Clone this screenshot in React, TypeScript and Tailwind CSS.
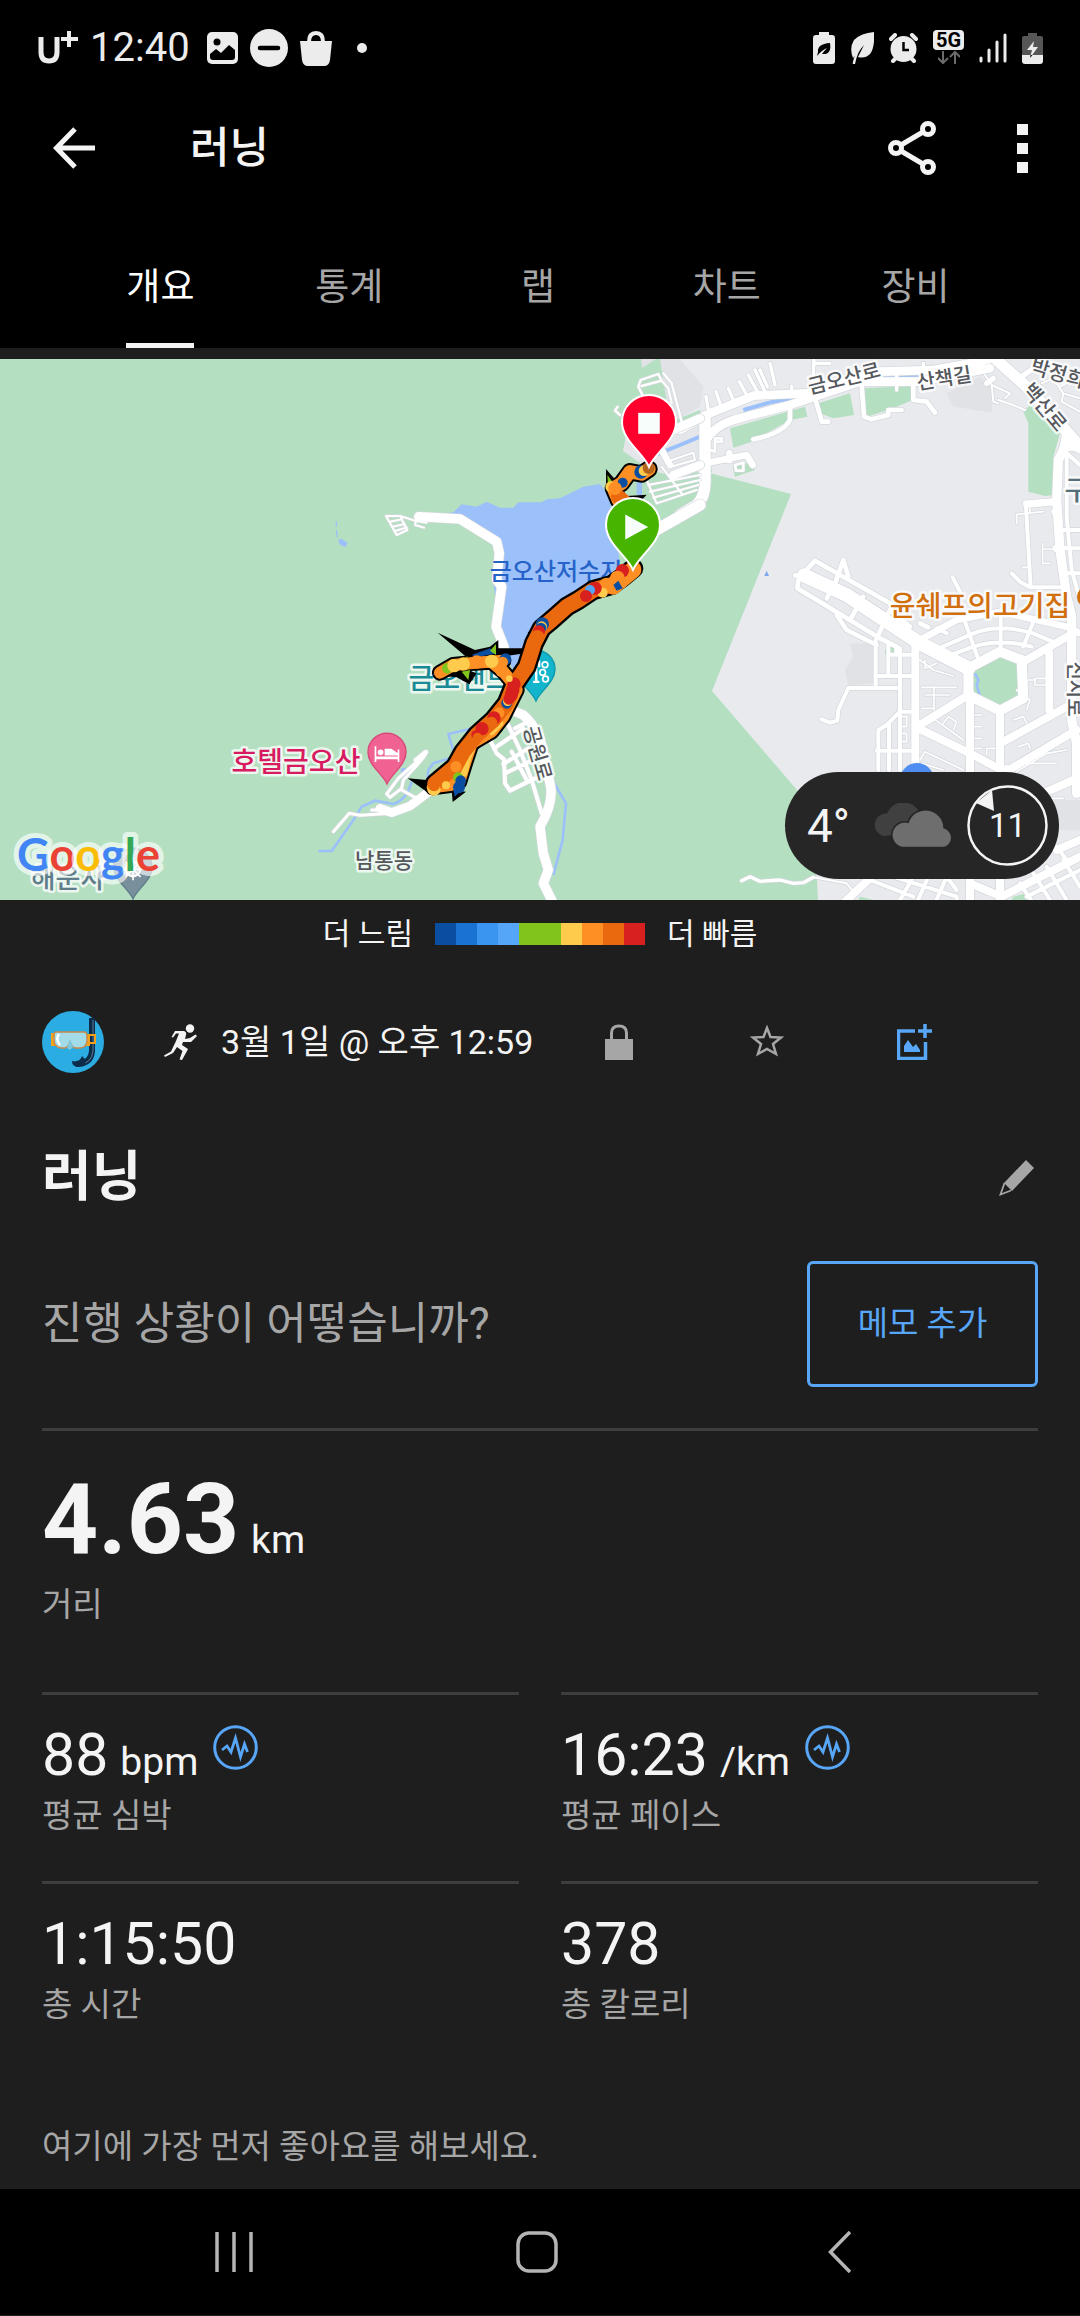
import type { ReactNode } from 'react';
import { clsx } from 'clsx';

interface Stat {
  readonly value: string;
  readonly unit?: string;
  readonly label: string;
  readonly zones?: boolean;
}

interface Road {
  readonly w: number;
  readonly d: string;
}

const TABS = ['개요', '통계', '랩', '차트', '장비'];

const STATS: Stat[] = [
  { value: '88', unit: 'bpm', label: '평균 심박', zones: true },
  { value: '16:23', unit: '/km', label: '평균 페이스', zones: true },
  { value: '1:15:50', label: '총 시간' },
  { value: '378', label: '총 칼로리' },
];

const PACE_COLORS = [
  'bg-[#0a4ea2]',
  'bg-[#1a73d2]',
  'bg-[#3a95f0]',
  'bg-[#55a5f8]',
  'bg-[#80c41c]',
  'bg-[#80c41c]',
  'bg-[#ffcb4c]',
  'bg-[#fd8f24]',
  'bg-[#ea690f]',
  'bg-[#d8201f]',
];

// Map pieces are kept in 3x tile units
const TILE_NORTH = 'translate(300 350) scale(.33333)';
const TILE_EAST = 'translate(680 350) scale(.33333)';
const TILE_SOUTH = 'translate(360 600) scale(.33333)';

const NORTH_ROADS: Road[] = [
  { w: 28, d: 'M356 500L480 507L590 575L598 610L590 690L605 710L588 830L612 890V930' },
  { w: 6, d: 'M258 498H300L322 540L290 555ZM270 515L306 508M278 530L314 522M286 543L320 532M300 498L345 512L380 518M350 500L345 525L372 533' },
  { w: 7, d: 'M1030 140L1015 110L1022 90L1075 72L1085 92L1025 108M1085 92L1105 115L1115 160M1090 70L1115 100L1145 215M960 195L945 182L953 170' },
  { w: 34, d: 'M1060 545L1200 465' },
  { w: 26, d: 'M1120 240L1200 205M1120 375L1200 345' },
  { w: 20, d: 'M1085 300L1110 345' },
  { w: 6, d: 'M1040 390L1070 460L1190 420M1045 405L1200 375M1050 425L1200 390M1060 443L1195 405M1085 350L1145 430M1115 330L1180 308L1185 330L1120 348' },
];

const EAST_ROADS: Road[] = [
  { w: 26, d: 'M0 240L90 190L220 137L380 130L600 65L760 60L900 35L960 18' },
  { w: 26, d: 'M75 275Q100 230 160 210L330 165L540 95L720 95L930 55' },
  { w: 34, d: 'M75 200V380Q78 440 50 465L0 495' },
  { w: 20, d: 'M0 375L75 340L200 315L218 345M148 310V330' },
  { w: 8, d: 'M165 345L190 338V362H168ZM92 300L105 305V265H125V275H108' },
  { w: 10, d: 'M85 180L78 140M120 160L108 125M160 150L145 115M200 135L178 95M235 130L205 75M255 125L225 60M262 110L240 60M285 105L270 40M335 130V108M400 75L402 30M402 40H450M650 60V120M730 60V40' },
  { w: 14, d: 'M330 175V210Q310 250 220 268M408 155L425 215H445M545 105L552 200L575 208L625 195V180H665M700 100V150L740 155L765 188' },
  { w: 34, d: 'M950 30L1050 120L1200 290' },
  { w: 16, d: 'M1010 90L1090 35M940 85L920 100' },
  { w: 6, d: 'M915 75L935 105L940 155L955 160M935 105L990 130L975 145M955 150L1000 165L1035 180M1085 100L1130 80L1180 100M1140 110L1180 90M1130 100L1150 130L1200 145M1150 130L1145 155L1200 185' },
  { w: 28, d: 'M1160 240Q1160 290 1135 330L1130 450L1140 600L1160 740L1175 800V1110L1190 1180V1330' },
  { w: 20, d: 'M1200 300Q1165 280 1145 310' },
  { w: 22, d: 'M1040 462L1130 455M1125 485L1135 480M1128 595H1145' },
  { w: 12, d: 'M1038 470L1052 712L1140 712M1160 320V500L1175 660L1200 750M1150 540H1200M1150 595H1200M1160 670H1200M995 670L1020 695L1050 712M1160 310L1200 345M818 682L845 735' },
  { w: 5, d: 'M1010 520V493L1090 485M1050 475V490M1088 580V640H1110M1088 597H1125M1028 652H1048' },
  { w: 42, d: 'M372 676L500 735L720 880L865 955' },
  { w: 14, d: 'M345 676H370M375 665L405 632L630 760L640 790L690 830M355 690L352 715L600 865L650 890V905M465 700L490 630L505 680M440 745L470 690M510 810L550 740M590 865L630 780M470 795L500 840L590 885M720 820L745 832' },
  { w: 20, d: 'M720 870L830 810L960 785L1160 830L1200 850' },
  { w: 12, d: 'M765 900L880 850Q960 820 1060 850L1130 880M800 920L880 890Q960 865 1055 890M855 815L892 920M962 795V905M1060 815L1030 890M770 835L800 850' },
  { w: 30, d: 'M865 955L960 905L1025 930L1030 1045L960 1082L865 1035Z' },
  { w: 24, d: 'M706 885V1250M870 1030V1660M960 1080V1660M715 1135L870 1210L960 1258H990L1190 1140' },
  { w: 24, d: 'M1030 935L1180 850M1108 910V1080M970 1175L1170 1065M720 1125L865 1035M1000 1370L1180 1290' },
  { w: 12, d: 'M587 870V1010M625 885V978M660 895V1260M585 978H700M625 914H700M660 1085H700M590 1202H700M505 1014H660M505 1014L475 1080L472 1112L450 1118L425 1108M595 1260V1140L620 1125L660 1085M627 1120V1260' },
  { w: 5, d: 'M720 930L760 960L820 978M735 930V955L770 940M725 1012H830M762 1010V1080M735 1035H810M725 1075H760M760 1105L850 1170M790 1120L805 1100L830 1115L820 1140M660 1100H680V1130H660M665 1150H680V1175H665M720 1230L735 1205L850 1260M725 1240L790 1260M885 1095H905M885 1130H905M885 1165H905M885 1195H905M920 1215V1195H945M1000 1110L1030 1100L1040 1120M1010 1020L1050 1050L1040 1080M1065 985H1100V1005H1065ZM1040 990H1065M1015 1190L1045 1180L1050 1195M1010 1265L1100 1210L1160 1200M1000 1240H1130M1110 1345H1150' },
  { w: 10, d: 'M185 1592L210 1580L240 1594L300 1590L340 1600L370 1598L400 1582' },
  { w: 6, d: 'M400 1582L500 1600L520 1625' },
  { w: 24, d: 'M490 1660L580 1575M870 1600L965 1640L1200 1520M1130 1500L1200 1470' },
  { w: 12, d: 'M570 1590L700 1640M640 1580L830 1640V1660M660 1650L700 1580M710 1660L745 1580M765 1660L800 1580M800 1580L830 1620M1040 1640L1200 1560M1060 1570L1110 1650M1100 1550L1160 1650M1150 1530L1200 1610M1020 1600L1060 1660M1130 1490L1160 1530' },
];

const SOUTH_ROADS: Road[] = [
  { w: 28, d: 'M430 320L490 345Q540 390 550 460L572 560Q580 610 540 680L550 760L565 810L550 850L580 910' },
  { w: 12, d: 'M435 355L480 450L515 540L545 640M380 400L410 460L432 478L435 550L450 572L525 535M410 440L490 385M430 492L505 445M435 520L515 482M455 455L500 540M465 385L495 370' },
  { w: 26, d: 'M220 565L150 618L95 638L60 625' },
  { w: 9, d: 'M70 630H35M95 640L0 646L-32 640L-80 695M125 570L165 592M200 455Q205 460 130 540L125 565L90 592L80 582L115 535L200 458M165 480L195 455' },
];

// GPS track: main run, upper hook, lower loop, theme park branch
const TRACK_MAIN = 'M820 -95L790 -70L755 -45L700 -30L655 0L620 20L575 60L545 85L522 130L500 200L462 255L440 310L400 360L350 405L310 455L285 500L225 550';
const TRACK_HOOK = 'M867 -393L845 -378L810 -385L785 -350L760 -335L775 -300L820 -260L820 -200';
const TRACK_LOOP = 'M218 562L270 555L298 545L315 490L335 430L395 395L430 350L470 270';
const TRACK_PARK = 'M240 218L280 195L345 188L430 182M400 190L430 215L455 245';

const ROUTE_DOTS = [
  { x: 547, y: 72, c: '#0a4ea2' },
  { x: 545, y: 80, c: '#ffcb4c', r: 16 },
  { x: 543, y: 84, c: '#0a4ea2', r: 16 },
  { x: 537, y: 94, c: '#d8201f', r: 18 },
  { x: 532, y: 112, c: '#ea690f', r: 22 },
  { x: 462, y: 252, c: '#d8201f' },
  { x: 458, y: 270, c: '#d8201f' },
  { x: 454, y: 284, c: '#d8201f' },
  { x: 440, y: 310, c: '#0a4ea2', r: 16 },
  { x: 443, y: 304, c: '#ffcb4c', r: 14 },
  { x: 447, y: 297, c: '#d8201f', r: 17 },
  { x: 417, y: 338, c: '#fd8f24', r: 16 },
  { x: 402, y: 354, c: '#d8201f' },
  { x: 394, y: 368, c: '#ea690f', r: 18 },
  { x: 366, y: 386, c: '#d8201f' },
  { x: 347, y: 404, c: '#d8201f', r: 13 },
  { x: 352, y: 412, c: '#ea690f', r: 14 },
  { x: 288, y: 500, c: '#fd8f24', r: 17 },
  { x: 222, y: 567, c: '#ffcb4c' },
  { x: 222, y: 556, c: '#ea690f', r: 18 },
  { x: 258, y: 556, c: '#ffcb4c', r: 12 },
  { x: 294, y: 532, c: '#80c41c', r: 15 },
  { x: 302, y: 542, c: '#0a4ea2', r: 16 },
  { x: 297, y: 562, c: '#0a4ea2', r: 18 },
  { x: 787, y: -88, c: '#d8201f' },
  { x: 772, y: -66, c: '#fd8f24', r: 22 },
  { x: 740, y: -45, c: '#fd8f24', r: 22 },
  { x: 728, y: -22, c: '#ffcb4c', r: 15 },
  { x: 705, y: -35, c: '#d8201f' },
  { x: 690, y: -30, c: '#55a5f8', r: 15 },
  { x: 678, y: -12, c: '#d8201f', r: 18 },
  { x: 843, y: -384, c: '#0a4ea2' },
  { x: 852, y: -388, c: '#ffcb4c', r: 16 },
  { x: 866, y: -396, c: '#b5651d', r: 18 },
  { x: 788, y: -352, c: '#0a4ea2', r: 15 },
  { x: 752, y: -340, c: '#ffcb4c', r: 16 },
  { x: 765, y: -335, c: '#fd8f24', r: 20 },
  { x: 262, y: 205, c: '#80c41c', r: 16 },
  { x: 282, y: 197, c: '#ffcb4c' },
  { x: 310, y: 192, c: '#ffcb4c' },
  { x: 350, y: 186, c: '#fd8f24' },
  { x: 436, y: 178, c: '#0a4ea2', r: 18 },
  { x: 428, y: 186, c: '#fd8f24', r: 16 },
  { x: 395, y: 184, c: '#ffcb4c' },
  { x: 425, y: 212, c: '#fd8f24', r: 19 },
  { x: 448, y: 236, c: '#ffcb4c', r: 10 },
];

function Roads({ tile, roads }: { tile: string; roads: Road[] }) {
  return (
    <g transform={tile} fill="none" strokeLinecap="round" strokeLinejoin="round">
      {roads.map(road => (
        <path key={`edge-${road.d}`} d={road.d} stroke="#d3d7dc" strokeWidth={road.w + 4} />
      ))}
      {roads.map(road => (
        <path key={road.d} d={road.d} stroke="#ffffff" strokeWidth={road.w} />
      ))}
    </g>
  );
}

function MapLabel(props: { x: number; y: number; size: number; fill: string; rotate?: number; halo?: string; children: string }) {
  const { x, y, size, fill, rotate = 0, halo = '#ffffff', children } = props;
  return (
    <text
      transform={`translate(${x} ${y}) rotate(${rotate})`}
      textAnchor="middle"
      dy={size * 0.37}
      fontSize={size}
      fontWeight={500}
      fill={fill}
      stroke={halo}
      strokeWidth={5}
      strokeOpacity={0.75}
      strokeLinejoin="round"
      paintOrder="stroke"
    >
      {children}
    </text>
  );
}

function Pin({ x, y, r, fill, stroke, children }: { x: number; y: number; r: number; fill: string; stroke: string; children?: ReactNode }) {
  return (
    <g transform={`translate(${x} ${y}) scale(${r / 80})`}>
      <path d="M0 130C-18 88-80 52-80-3A80 80 0 0 1 80-3C80 52 18 88 0 130Z" fill={fill} stroke={stroke} strokeWidth={6} />
      {children}
    </g>
  );
}

function RouteMap() {
  return (
    <svg viewBox="0 359 1080 541" className="block w-full" role="img" aria-label="러닝 경로 지도">
      <rect y={359} width={1080} height={541} fill="#e8eaed" />
      <path d="M0 359H667L682 422L650 468L713 474L791 494L712 691L797 790L817 879L818 900H0Z" fill="#b4dfc1" />
      <path d="M641 359H667L680 418L700 410L712 472L655 466L623 451L632 415Z" fill="#b4dfc1" />
      <path d="M623 451L628 425L700 422L712 466L680 478L650 470Z" fill="#e4e6ea" />
      <path d="M641 359H656L642 368Z" fill="#e0e2e6" />
      <g transform={TILE_EAST}>
        <path d="M-60 27H0L70 110L60 170L-30 220Z M800 130L900 80L940 110L935 187L820 170Z M510 880H590L585 1000L505 1005L495 960L520 920Z M1110 1350H1200V1440H1110Z" fill="#e0e2e6" />
        <path
          d="M150 235L375 170L382 200L330 210L215 275L160 293ZM415 160L510 130L522 195L460 205L420 190ZM550 115L697 108V150L640 175L560 200ZM1030 185L1050 165L1140 250L1120 320V435L1095 438L1045 425V220ZM158 350L215 335L225 360L165 380ZM-60 390L65 365L80 420L0 480L-60 490ZM615 900L630 882L655 900V912H615ZM530 1660L540 1640L600 1655V1660ZM990 1660L1000 1640L1040 1630V1660Z"
          fill="#b4dfc1"
        />
        <path d="M880 955L960 912L1015 930V1040L960 1072L880 1035Z" fill="#b4dfc1" />
        <path d="M0 285L60 260M-75 315L0 285M190 180L270 157L390 135M610 77H715M870 48L930 30" stroke="#9cc0f9" strokeWidth={12} fill="none" />
        <path d="M885 970L895 990L890 1005L900 1040M980 920L990 927" stroke="#9cc0f9" strokeWidth={8} fill="none" />
        <path d="M253 678L260 662L267 678Z" fill="#7ea6ea" />
      </g>
      <g transform={TILE_NORTH}>
        <path
          d="M435 490L460 487L485 463L530 470L560 455L600 473L640 473L655 457H725L740 448L780 445L850 410L900 402L930 440L960 640L900 720L780 790L720 840L690 900L639 960L615 910L600 850L580 700L600 590L480 515Z"
          fill="#9cc0f9"
        />
        <path d="M1010 390H1026V435H1010ZM115 568L128 568L143 580L135 592L118 582Z" fill="#9cc0f9" />
        <path d="M109 515V530M109 540L112 562" stroke="#9cc0f9" strokeWidth={4} />
      </g>
      <g transform={TILE_SOUTH} fill="none" stroke="#9cc0f9" strokeWidth={8} strokeLinejoin="round">
        <path d="M580 545L618 610L608 720L580 825M340 385L265 402L285 470L220 490L205 510L200 570M155 545Q140 600 100 612L45 602L5 620L-20 660L-85 753H-125" />
        <circle cx={132} cy={513} r={10} fill="#9cc0f9" stroke="none" />
      </g>
      <Roads tile={TILE_EAST} roads={EAST_ROADS} />
      <Roads tile={TILE_NORTH} roads={NORTH_ROADS} />
      <Roads tile={TILE_SOUTH} roads={SOUTH_ROADS} />

      <MapLabel x={844} y={378} size={20} fill="#55585c" rotate={-14}>금오산로</MapLabel>
      <MapLabel x={944} y={378} size={20} fill="#55585c" rotate={-9}>산책길</MapLabel>
      <MapLabel x={1058} y={373} size={20} fill="#55585c" rotate={16}>박정희</MapLabel>
      <MapLabel x={1045} y={407} size={20} fill="#55585c" rotate={50}>백산로</MapLabel>
      <MapLabel x={1075} y={689} size={20} fill="#55585c" rotate={90}>신시로</MapLabel>
      <MapLabel x={538} y={753} size={20} fill="#55585c" rotate={74}>공원로</MapLabel>
      <MapLabel x={384} y={860} size={21} fill="#55585c">남통동</MapLabel>
      <MapLabel x={980} y={606} size={28} fill="#d06f0c">윤쉐프의고기집</MapLabel>
      <MapLabel x={1077} y={490} size={27} fill="#546e7a">구</MapLabel>
      <MapLabel x={296} y={762} size={28} fill="#d81b60">호텔금오산</MapLabel>
      <MapLabel x={460} y={679} size={28} fill="#1a8a96">금오랜드</MapLabel>
      <MapLabel x={556} y={571} size={24} fill="#2563c9" halo="none">금오산저수지</MapLabel>
      <MapLabel x={68} y={878} size={27} fill="#607d8b">해운사</MapLabel>
      <circle cx={1088} cy={597} r={11} fill="#d06f0c" />
      <circle cx={917} cy={780} r={17} fill="#4f8df0" />

      <Pin x={536} y={670} r={19} fill="#12b5cb" stroke="#0f99ad">
        <path d="M-12 55H14V45H6V-10H-4V45H-12ZM8-40H18V-12H8Z" fill="#ffffff" />
        <g fill="none" stroke="#ffffff" strokeWidth={7}>
          <circle cx={38} cy={-22} r={12} />
          <circle cx={28} cy={10} r={12} />
          <circle cx={40} cy={38} r={12} />
        </g>
      </Pin>
      <Pin x={387} y={753} r={19} fill="#f06292" stroke="#d84a7b">
        <path d="M-52-28H-45V15H45V-15H52V38H45V26H-45V38H-52ZM-10-18H18L45 0V10H-10Z" fill="#ffffff" />
        <circle cx={-27} cy={-3} r={12} fill="#ffffff" />
      </Pin>
      <Pin x={133} y={868} r={19} fill="#78909c" stroke="#607d8b">
        <g fill="none" stroke="#ffffff" strokeWidth={9}>
          <circle cy={5} r={30} />
          <path d="M0-42V52M-46 5H46M-32-27L32 37M32-27L-32 37" strokeWidth={7} />
        </g>
      </Pin>

      <g transform={TILE_SOUTH} strokeLinejoin="round" strokeLinecap="round">
        <path d="M233 98L345 150L390 140L415 120V145H500L495 160L440 168L330 180ZM215 222L235 195L265 190L350 220L328 253L290 232L225 226ZM143 535L225 542L200 575ZM275 570L278 606L318 575ZM738 -393L775 -350V-290L738 -340ZM800 -312L860 -316L840 -295ZM503 95L525 98L515 130ZM425 395L400 395L420 360ZM350 370L375 365L352 400Z" fill="#000000" />
        <g fill="none" stroke="#000000" strokeWidth={52}>
          <path d={TRACK_MAIN} strokeWidth={60} />
          <path d={TRACK_HOOK} strokeWidth={52} />
          <path d={TRACK_LOOP} strokeWidth={48} />
          <path d={TRACK_PARK} strokeWidth={48} />
        </g>
        <path d="M215 225L265 188L275 215ZM335 165L390 145L410 160L350 172ZM280 570L284 590L308 568Z" fill="#0a4ea2" />
        <path d="M390 152L408 132V165ZM742 -375L765 -345L745 -330ZM305 215L325 240L330 210ZM310 180L322 168V190Z" fill="#80c41c" />
        <g fill="none">
          <path d={TRACK_LOOP} stroke="#fd8f24" strokeWidth={36} />
          <path d="M312 520L325 470L340 435" stroke="#ffcb4c" strokeWidth={20} />
          <path d="M395 395L420 370" stroke="#ffcb4c" strokeWidth={20} />
          <path d={TRACK_PARK} stroke="#fd8f24" strokeWidth={36} />
          <path d={TRACK_HOOK} stroke="#fd8f24" strokeWidth={40} />
          <path d="M775 -310L820 -270" stroke="#ea690f" strokeWidth={44} />
          <path d={TRACK_MAIN} stroke="#ea690f" strokeWidth={46} />
          <path d="M820 -90L760 -40" stroke="#fd8f24" strokeWidth={48} />
        </g>
        {ROUTE_DOTS.map(dot => (
          <circle key={`${dot.x}-${dot.y}`} cx={dot.x} cy={dot.y} r={dot.r ?? 20} fill={dot.c} />
        ))}
        <path d="M760 -45L775 -58L788 -35L770 -28Z" fill="#0a4ea2" />
      </g>

      <Pin x={649} y={423} r={27} fill="#ff002e" stroke="#ffffff">
        <rect x={-32} y={-30} width={64} height={62} fill="#f7fdfb" />
      </Pin>
      <Pin x={633} y={526} r={27} fill="#47b500" stroke="#ffffff">
        <path d="M-23-34L45 3L-23 40Z" fill="#f7fdfb" />
      </Pin>

      <text
        x={17}
        y={871}
        fontSize={45}
        stroke="#ffffff"
        strokeOpacity={0.65}
        strokeWidth={10}
        strokeLinejoin="round"
        paintOrder="stroke"
        className="font-[Lato,sans-serif] font-bold"
      >
        <tspan fill="#4285f4">G</tspan>
        <tspan fill="#ea4335">o</tspan>
        <tspan fill="#fbbc05">o</tspan>
        <tspan fill="#4285f4">g</tspan>
        <tspan fill="#34a853">l</tspan>
        <tspan fill="#ea4335">e</tspan>
      </text>
    </svg>
  );
}

function WeatherPill() {
  return (
    <div className="absolute right-[21px] bottom-[21px] flex h-[107px] w-[274px] items-center rounded-full bg-[#262626] pr-[11px] pl-[22px] text-[#f4f4f4]">
      <span className="text-[46px] leading-none">4°</span>
      <svg viewBox="0 0 246 136" className="ml-auto h-[45px] w-[82px]" aria-hidden="true">
        <path d="M35 100A34 34 0 0 1 42 32A52 52 0 0 1 140 32L100 90Z" fill="#404040" />
        <path d="M86 135A38 38 0 0 1 105 58A56 56 0 0 1 214 75A31 31 0 0 1 214 135Z" fill="#6e6e6e" stroke="#262626" strokeWidth={5} />
      </svg>
      <div className="relative ml-[12px] flex size-[81px] items-center justify-center">
        <svg viewBox="0 0 81 81" className="absolute inset-0" aria-hidden="true">
          <circle cx={40.5} cy={40.5} r={39} fill="none" stroke="#f4f4f4" strokeWidth={2.5} />
          <path d="M9 18L25 5L27 26Z" fill="#f4f4f4" />
        </svg>
        <span className="text-[33px] leading-none">11</span>
      </div>
    </div>
  );
}

function StatusBar() {
  return (
    <div className="flex h-24 items-center justify-between pr-[37px] pl-[38px] text-[#ececec]">
      <div className="flex items-center">
        <svg viewBox="0 0 40 36" className="h-[36px] w-[40px]" fill="none" stroke="currentColor" aria-label="U+">
          <path d="M3 7V22Q3 31 11 31Q19 31 19 22V7" strokeWidth={5} />
          <path d="M23 9H40M31 1V17" strokeWidth={4} />
        </svg>
        <span className="ml-3 text-[40px] leading-none">12:40</span>
        <svg viewBox="0 0 31 32" className="ml-[17px] h-[32px] w-[31px]" aria-hidden="true">
          <rect width={31} height={32} rx={5} fill="currentColor" />
          <path d="M3 22L9 17L14 21L22 13L28 18V25Q28 28 25 28H6Q3 28 3 25Z" fill="#000000" />
          <circle cx={10} cy={10} r={3.5} fill="#000000" />
        </svg>
        <svg viewBox="0 0 38 38" className="ml-[12px] size-[38px]" aria-hidden="true">
          <circle cx={19} cy={19} r={19} fill="currentColor" />
          <path d="M10 19H28" stroke="#000000" strokeWidth={4.5} strokeLinecap="round" />
        </svg>
        <svg viewBox="0 0 32 35" className="ml-[12px] h-[35px] w-[32px]" aria-hidden="true">
          <path d="M0 10H32L30 29Q29 35 24 35H8Q3 35 2 29Z" fill="currentColor" />
          <path d="M9 11Q9 2 16 2Q23 2 23 11" fill="none" stroke="currentColor" strokeWidth={4} />
        </svg>
        <span className="ml-[25px] size-[10px] rounded-full bg-current" />
      </div>
      <div className="flex items-center gap-[15px]">
        <svg viewBox="0 0 22 32" className="h-[32px] w-[22px]" aria-hidden="true">
          <path d="M6 0H16V3H19Q22 3 22 6V29Q22 32 19 32H3Q0 32 0 29V6Q0 3 3 3H6Z" fill="currentColor" />
          <path d="M5 20Q4 12 17 11Q19 23 9 22Q12 18 14 16Q9 18 4 24Z" fill="#000000" />
        </svg>
        <svg viewBox="0 0 24 32" className="h-[32px] w-[24px]" aria-hidden="true">
          <path d="M24 0Q25 16 20 22Q15 27 8 25L14 13L3 26Q-1 16 4 8Q11 1 24 0Z" fill="currentColor" />
          <path d="M4 31Q6 20 13 11" stroke="currentColor" strokeWidth={2.5} strokeLinecap="round" fill="none" />
        </svg>
        <svg viewBox="0 0 29 30" className="h-[30px] w-[29px]" aria-hidden="true">
          <circle cx={14.5} cy={16} r={13} fill="currentColor" />
          <path d="M2 6L6 2M27 6L23 2M4 28L7 25M25 28L22 25" stroke="currentColor" strokeWidth={4} strokeLinecap="round" />
          <path d="M14.500 9V17H20" fill="none" stroke="#000000" strokeWidth={2.5} />
        </svg>
        <div className="flex h-[36px] w-[31px] flex-col items-center">
          <span className="flex h-[20px] w-full items-center justify-center rounded-[4px] bg-current">
            <span className="text-[20px] leading-none font-bold text-black">5G</span>
          </span>
          <svg viewBox="0 0 22 14" className="h-[14px] w-[22px]" fill="none" stroke="#6b6b6b" strokeWidth={2} aria-hidden="true">
            <path d="M5 1V13M0 8L5 13L10 8M17 14V2M12 7L17 2L22 7" />
          </svg>
        </div>
        <svg viewBox="0 0 28 30" className="h-[30px] w-[28px]" stroke="currentColor" strokeWidth={3} strokeLinecap="round" aria-hidden="true">
          <path d="M2 25V28M10 17V28M18 9V28M26 2V28" />
        </svg>
        <svg viewBox="0 0 21 31" className="h-[31px] w-[21px]" aria-hidden="true">
          <path d="M6 0H15V3H19Q21 3 21 5V23H0V5Q0 3 2 3H6Z" fill="#565656" />
          <path d="M0 22H21V28Q21 31 18 31H3Q0 31 0 28Z" fill="currentColor" />
          <path d="M12 8L5 17H10L8 25L16 14H11Z" fill="currentColor" />
          <path d="M8.600 22H10.500L8 25Z" fill="#000000" />
        </svg>
      </div>
    </div>
  );
}

function AppHeader() {
  return (
    <header className="flex h-[104px] items-center pr-[36px] pl-[53px] text-[#f4f4f4]">
      <button type="button" aria-label="뒤로">
        <svg viewBox="0 0 42 42" className="size-[42px]" fill="none" stroke="currentColor" strokeWidth={5}>
          <path d="M42 21H4M22 2L3.500 21L22 40" />
        </svg>
      </button>
      <h1 className="ml-[95px] text-[43px] leading-none font-medium">러닝</h1>
      <button type="button" className="ml-auto" aria-label="공유">
        <svg viewBox="0 0 48 54" className="h-[54px] w-[48px]" fill="none" stroke="currentColor" strokeWidth={5}>
          <circle cx={8} cy={27} r={5.500} />
          <circle cx={40} cy={8} r={5.500} />
          <circle cx={40} cy={46} r={5.500} />
          <path d="M13 24L35 11M13 30L35 43" />
        </svg>
      </button>
      <button type="button" className="ml-[65px] flex w-[43px] flex-col items-center gap-2" aria-label="더보기">
        <span className="size-[11px] bg-current" />
        <span className="size-[11px] bg-current" />
        <span className="size-[11px] bg-current" />
      </button>
    </header>
  );
}

function Avatar() {
  return (
    <svg viewBox="0 0 62 62" className="size-[62px] shrink-0" role="img" aria-label="프로필">
      <circle cx={31} cy={31} r={31} fill="#2bace2" />
      <path d="M50 7V40Q49 53 34 53" fill="none" stroke="#0d2c4a" strokeWidth={6} />
      <path d="M51 9V40Q50 52 37 54" fill="none" stroke="#5d7d99" strokeWidth={1} />
      <path d="M30 50Q38 52 40 45Q46 50 42 55Q30 58 30 50Z" fill="#0d2c4a" />
      <path d="M10 23H12V34H10ZM45 24H47V34H45ZM47 24H53V32H47" fill="none" stroke="#f5a11c" strokeWidth={2} />
      <path d="M14 21H42Q45 21 45 25V30Q44 37 38 37H33Q30 36 28 31Q26 36 23 37H19Q12 36 12 29V24Q12 21 14 21Z" fill="#a3dbe8" stroke="#c98a4a" strokeWidth={1.500} />
      <path d="M17 23Q13 28 18 34" fill="none" stroke="#ffffff" strokeWidth={2.500} />
      <path d="M28 28L31 36L28 39L25 37Z" fill="#7cc7e0" />
    </svg>
  );
}

function RunnerIcon() {
  return (
    <svg viewBox="0 0 33 36" className="ml-[60px] h-[36px] w-[33px] shrink-0" fill="#f4f4f4" aria-hidden="true">
      <circle cx={26} cy={4.500} r={4.200} />
      <path d="M11 7L20 7Q23 8 22 11L21 15L26 14L31.500 10.500L33 12L27 18L19 18L18 21L24 25L23 27L18 36L15.500 35.500L18.500 27L13 23L9 29L1 33L0 31.500L7 27.500L12 17L15 9.500L12 9.500L9 13.500L7.500 13Z" />
    </svg>
  );
}

function ActivityRow() {
  return (
    <div className="flex h-[150px] items-center">
      <Avatar />
      <RunnerIcon />
      <p className="ml-[24px] text-[34px] leading-10 whitespace-nowrap text-[#f4f4f4]">3월 1일 @ 오후 12:59</p>
      <div className="mr-[49px] ml-auto flex">
        <button type="button" className="flex w-[148px] justify-center" aria-label="비공개">
          <svg viewBox="0 0 28 36" className="h-[36px] w-[28px]">
            <path d="M0 15H28V36H0Z" fill="#a6a6a6" />
            <path d="M6.500 16V9Q6.500 2 14 2Q21.500 2 21.500 9V16" fill="none" stroke="#a6a6a6" strokeWidth={3} />
          </svg>
        </button>
        <button type="button" className="flex w-[148px] justify-center" aria-label="즐겨찾기">
          <svg viewBox="0 0 34 34" className="size-[34px]" fill="none" stroke="#a6a6a6" strokeWidth={2.500}>
            <path d="M17 4L20.500 13L31 13.500L23 20L26 30L17 25L8 30L11 20L3 13.500L13.500 13Z" />
          </svg>
        </button>
        <button type="button" className="flex w-[148px] justify-center" aria-label="사진 추가">
          <svg viewBox="0 0 36 36" className="size-[36px]">
            <path d="M18 7H1.500V34.500H28.500V18M28 0V14M21 7H35" fill="none" stroke="#58a6f8" strokeWidth={3.500} />
            <path d="M7 28V22L11 16L16 23L19 20L23 26V28Z" fill="#58a6f8" />
          </svg>
        </button>
      </div>
    </div>
  );
}

function StatCell({ value, unit, label, zones }: Stat) {
  return (
    <div className="border-t-[3px] border-[#3e3e3e] pt-[30px] pb-[45px]">
      <dd className="flex h-[60px] text-[#f4f4f4]">
        <span className="text-[59px] leading-[60px]">
          {value}
          {unit && <span className="ml-3 text-[39px] leading-none">{unit}</span>}
        </span>
        {zones && (
          <svg viewBox="0 0 45 45" className="ml-[15px] size-[45px]" fill="none" stroke="#58a6f8" aria-hidden="true">
            <circle cx={22.500} cy={22.500} r={20.800} strokeWidth={3} />
            <path d="M9 25L14 21L18 27L22.500 13L27.500 32L31.500 19L34.500 27" strokeWidth={2.800} />
          </svg>
        )}
      </dd>
      <dt className="mt-[11px] text-[33px] leading-10 text-[#a6a6a6]">{label}</dt>
    </div>
  );
}

function NavBar() {
  return (
    <nav className="flex h-[126px] items-center justify-center gap-[161px] bg-black pr-[7px] text-[#b4b4b4]" aria-label="시스템">
      <button type="button" className="flex w-[142px] justify-center" aria-label="최근 앱">
        <svg viewBox="0 0 40 42" className="h-[42px] w-[40px]" stroke="currentColor" strokeWidth={3.500}>
          <path d="M3 1V41M20 1V41M37 1V41" />
        </svg>
      </button>
      <button type="button" className="flex w-[142px] justify-center" aria-label="홈">
        <svg viewBox="0 0 42 42" className="size-[42px]" fill="none" stroke="currentColor" strokeWidth={3.500}>
          <rect x={2} y={2} width={38} height={38} rx={11} />
        </svg>
      </button>
      <button type="button" className="flex w-[142px] justify-center" aria-label="이전">
        <svg viewBox="0 0 24 42" className="h-[42px] w-[24px]" fill="none" stroke="currentColor" strokeWidth={3.500}>
          <path d="M22 1L2.500 21L22 41" />
        </svg>
      </button>
    </nav>
  );
}

export default function App() {
  return (
    <div className="min-h-screen bg-[#1e1e1e] font-[Roboto,'Noto_Sans_CJK_KR',sans-serif]">
      <div className="bg-black">
        <StatusBar />
        <AppHeader />
        <div role="tablist" className="grid grid-cols-5 pr-[70px] pl-[66px]">
          {TABS.map((tab, i) => (
            <button
              key={tab}
              type="button"
              role="tab"
              aria-selected={i === 0}
              className={clsx(
                'mx-auto border-b-[5px] pt-[64px] pb-[31px] text-[37px] leading-[48px]',
                i === 0 ? 'border-[#f4f4f4] text-white' : 'border-transparent text-[#a6a6a6]',
              )}
            >
              {tab}
            </button>
          ))}
        </div>
      </div>

      <main>
        <section className="relative mt-[11px]">
          <RouteMap />
          <WeatherPill />
        </section>

        <div className="flex h-[67px] items-center justify-center gap-[22px] text-[30px] leading-10 text-[#f4f4f4]">
          <span>더 느림</span>
          <span className="flex">
            {PACE_COLORS.map((color, i) => (
              <span key={i} className={clsx('h-[22px] w-[21px]', color)} />
            ))}
          </span>
          <span>더 빠름</span>
        </div>

        <div className="px-[42px]">
          <ActivityRow />

          <div className="flex h-[122px] items-center justify-between">
            <h2 className="text-[54px] leading-[64px] font-bold text-[#f4f4f4]">러닝</h2>
            <button type="button" className="mr-1" aria-label="이름 편집">
              <svg viewBox="0 0 35 36" className="h-[36px] w-[35px]">
                <path d="M27 0L35 8L13 31L5 23Z" fill="#a6a6a6" />
                <path d="M5.500 23L1.500 34.500L12 30.500" fill="none" stroke="#a6a6a6" strokeWidth={1.800} />
              </svg>
            </button>
          </div>

          <div className="flex h-[170px] items-center justify-between">
            <p className="text-[44px] leading-[56px] text-[#a6a6a6]">진행 상황이 어떻습니까?</p>
            <button type="button" className="h-[126px] w-[231px] rounded-md border-[3px] border-[#58a6f8] text-[33px] leading-10 text-[#58a6f8]">
              메모 추가
            </button>
          </div>

          <dl>
            <div className="mt-[19px] border-t-[3px] border-[#3e3e3e] pt-[39px] pb-[67px]">
              <dd className="text-[98px] leading-[100px] font-bold text-[#f4f4f4]">
                4.63<span className="ml-3 text-[39px] leading-none font-normal">km</span>
              </dd>
              <dt className="mt-[15px] text-[33px] leading-10 text-[#a6a6a6]">거리</dt>
            </div>
            <div className="grid grid-cols-2 gap-x-[42px]">
              {STATS.map(stat => (
                <StatCell key={stat.label} {...stat} />
              ))}
            </div>
          </dl>

          <p className="pt-[57px] pb-[22px] text-[33px] leading-10 text-[#a6a6a6]">여기에 가장 먼저 좋아요를 해보세요.</p>
        </div>
      </main>

      <NavBar />
    </div>
  );
}
